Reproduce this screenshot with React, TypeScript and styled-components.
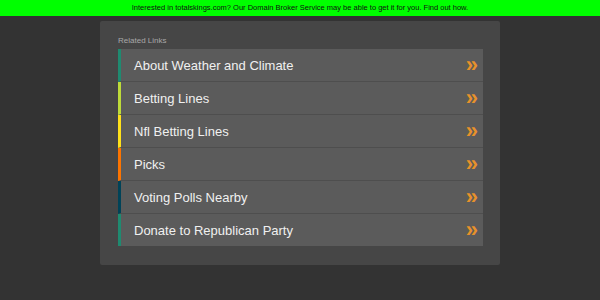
import styled, { createGlobalStyle } from 'styled-components';

const GlobalStyle = createGlobalStyle`
  html, body {
    margin: 0;
    padding: 0;
    background: #333333;
    font-family: 'Liberation Sans', Arial, sans-serif;
  }
`;

const TopBar = styled.div`
  height: 16px;
  background: #00ff00;
  color: #111;
  font-size: 7.5px;
  line-height: 16px;
  text-align: center;
`;

const Panel = styled.div`
  width: 400px;
  box-sizing: border-box;
  margin: 5px auto 0;
  padding: 15px 17px 19px 18px;
  background: #464646;
  border-radius: 2px;
`;

const Heading = styled.div`
  color: #a8a8a8;
  font-size: 8px;
  line-height: 10px;
  margin-bottom: 3px;
`;

const List = styled.ul`
  list-style: none;
  margin: 0;
  padding: 0;
`;

const Row = styled.li<{ $stripe: string; $last?: boolean }>`
  display: flex;
  align-items: center;
  justify-content: space-between;
  box-sizing: border-box;
  height: ${(p) => (p.$last ? '32px' : '33px')};
  background: #5b5b5b;
  border-left: 3px solid ${(p) => p.$stripe};
  border-bottom: ${(p) => (p.$last ? 'none' : '1px solid #4e4e4e')};
  padding: 0 5px 0 13px;
  color: #f0f0f0;
  font-size: 13px;
`;

const Arrow = styled.span`
  color: #e8922a;
  font-size: 22px;
  font-weight: bold;
  line-height: 1;
  margin-top: 0;
`;

const links = [
  { label: 'About Weather and Climate', stripe: '#1f8a70' },
  { label: 'Betting Lines', stripe: '#bedb39' },
  { label: 'Nfl Betting Lines', stripe: '#ffe11a' },
  { label: 'Picks', stripe: '#fd7400' },
  { label: 'Voting Polls Nearby', stripe: '#004358' },
  { label: 'Donate to Republican Party', stripe: '#1f8a70' },
];

const App = () => {
  return (
    <>
      <GlobalStyle />
      <TopBar>
        Interested in totalskings.com? Our Domain Broker Service may be able to get it for you. Find out how.
      </TopBar>
      <Panel>
        <Heading>Related Links</Heading>
        <List>
          {links.map((l, i) => (
            <Row key={l.label} $stripe={l.stripe} $last={i === links.length - 1}>
              <span>{l.label}</span>
              <Arrow>»</Arrow>
            </Row>
          ))}
        </List>
      </Panel>
    </>
  );
};

export default App;
